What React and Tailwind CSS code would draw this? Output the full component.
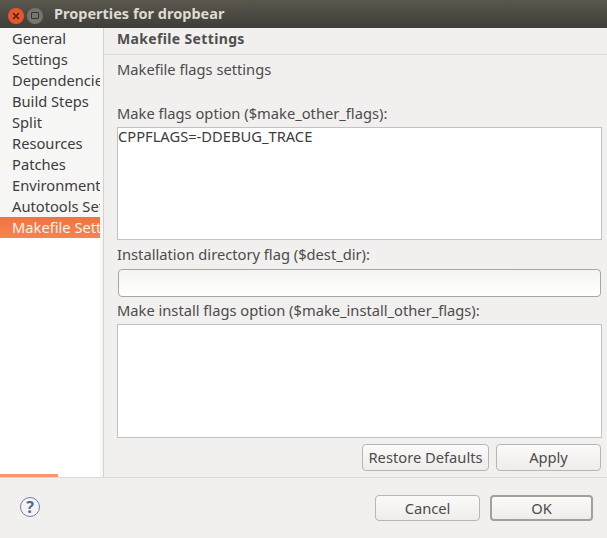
const font = { fontFamily: "'Noto Sans', sans-serif" }

const navItems = [
  "General",
  "Settings",
  "Dependencies",
  "Build Steps",
  "Split",
  "Resources",
  "Patches",
  "Environment",
  "Autotools Settings",
  "Makefile Settings",
]

function Button({ label, className }) {
  return (
    <button className={"flex items-center justify-center rounded-[4px] border bg-gradient-to-b from-[#fbfaf9] to-[#efedeb] text-[14.7px] text-[#4c4c4c] " + className}>
      {label}
    </button>
  )
}

function Sidebar() {
  return (
    <div className="flex w-[100px] flex-col overflow-hidden bg-white">
      <div className="flex-1">
        {navItems.map((item, i) => (
          <div
            key={item}
            className={
              i === navItems.length - 1
                ? "h-[21px] whitespace-nowrap bg-gradient-to-b from-[#ef7440] to-[#f8834f] pl-3 text-[14.7px] leading-[21px] text-[#fdf3ee]"
                : "h-[21px] whitespace-nowrap bg-[#f6f6f5] pl-3 text-[14.7px] leading-[21px] text-[#3c3c3c]"
            }
          >
            {item}
          </div>
        ))}
      </div>
      <div className="h-[3px] w-[58px] bg-[#fb9670]" />
    </div>
  )
}

function Label({ children, className }) {
  return <div className={"pl-[13px] text-[14.7px] leading-[20px] text-[#4c4c4c] " + className}>{children}</div>
}

function MainPanel() {
  return (
    <div className="flex flex-1 flex-col border-l border-[#d5d2ce]">
      <div className="h-[27px] border-b border-[#dbd9d5] pl-[13px] text-[14px] font-bold leading-[21px] tracking-[0.35px] text-[#4f4f4f]">
        Makefile Settings
      </div>
      <Label className="mt-[4px]">Makefile flags settings</Label>
      <Label className="mt-[24px]">Make flags option ($make_other_flags):</Label>
      <div className="ml-[13px] mr-[5px] mt-[4px] h-[113px] border border-[#c4c2be] bg-white text-[14.7px] leading-[16px] text-[#3c3c3c]">
        CPPFLAGS=-DDEBUG_TRACE
      </div>
      <Label className="mt-[4px]">Installation directory flag ($dest_dir):</Label>
      <div className="ml-[14px] mr-[6px] mt-[5px] h-[28px] rounded-[4px] border border-[#a9a6a2] bg-gradient-to-b from-[#f4f4f3] to-white" />
      <Label className="mt-[3px]">Make install flags option ($make_install_other_flags):</Label>
      <div className="ml-[13px] mr-[5px] mt-[4px] h-[114px] border border-[#c4c2be] bg-white" />
      <div className="mr-[6px] mt-[6px] flex justify-end gap-[7px]">
        <Button label="Restore Defaults" className="h-[27px] w-[127px] border-[#b9b6b2]" />
        <Button label="Apply" className="h-[27px] w-[105px] border-[#b9b6b2]" />
      </div>
    </div>
  )
}

export default function App() {
  return (
    <div className="flex h-[538px] w-[607px] flex-col overflow-hidden bg-[#f1f0ee]" style={font}>
      <div className="flex h-[28px] items-center bg-gradient-to-b from-[#5a574d] to-[#3f3e39]">
        <div className="ml-[8px] mt-[3px] flex h-[16px] w-[16px] items-center justify-center rounded-full bg-[#e9562a]">
          <svg width="8" height="8" viewBox="0 0 8 8"><path d="M1 1l6 6M7 1l-6 6" stroke="#4a2012" strokeWidth="1.6" /></svg>
        </div>
        <div className="ml-[3px] mt-[3px] flex h-[16px] w-[16px] items-center justify-center rounded-full bg-[#77756d]">
          <div className="h-[7px] w-[8px] rounded-[1px] border border-[#35342f]" />
        </div>
        <div className="ml-[11px] text-[14.5px] font-bold text-[#dfdbd2]">Properties for dropbear</div>
      </div>
      <div className="flex h-[449px]">
        <Sidebar />
        <div className="w-[3px] bg-[#f7f7f6]" />
        <MainPanel />
      </div>
      <div className="flex flex-1 items-start justify-between border-t border-[#dcdad6] pl-[20px] pr-[14px]">
        <div className="mt-[19px] flex h-[20px] w-[20px] items-center justify-center rounded-full border border-[#6f7f9c] bg-[#f4f4f6] text-[16px] font-bold leading-none text-[#53658a]">
          ?
        </div>
        <div className="mt-[17px] flex items-center gap-[10px]">
          <Button label="Cancel" className="h-[26px] w-[105px] border-[#b9b6b2]" />
          <Button label="OK" className="h-[26px] w-[103px] border-2 border-[#a3a09c]" />
        </div>
      </div>
    </div>
  )
}
